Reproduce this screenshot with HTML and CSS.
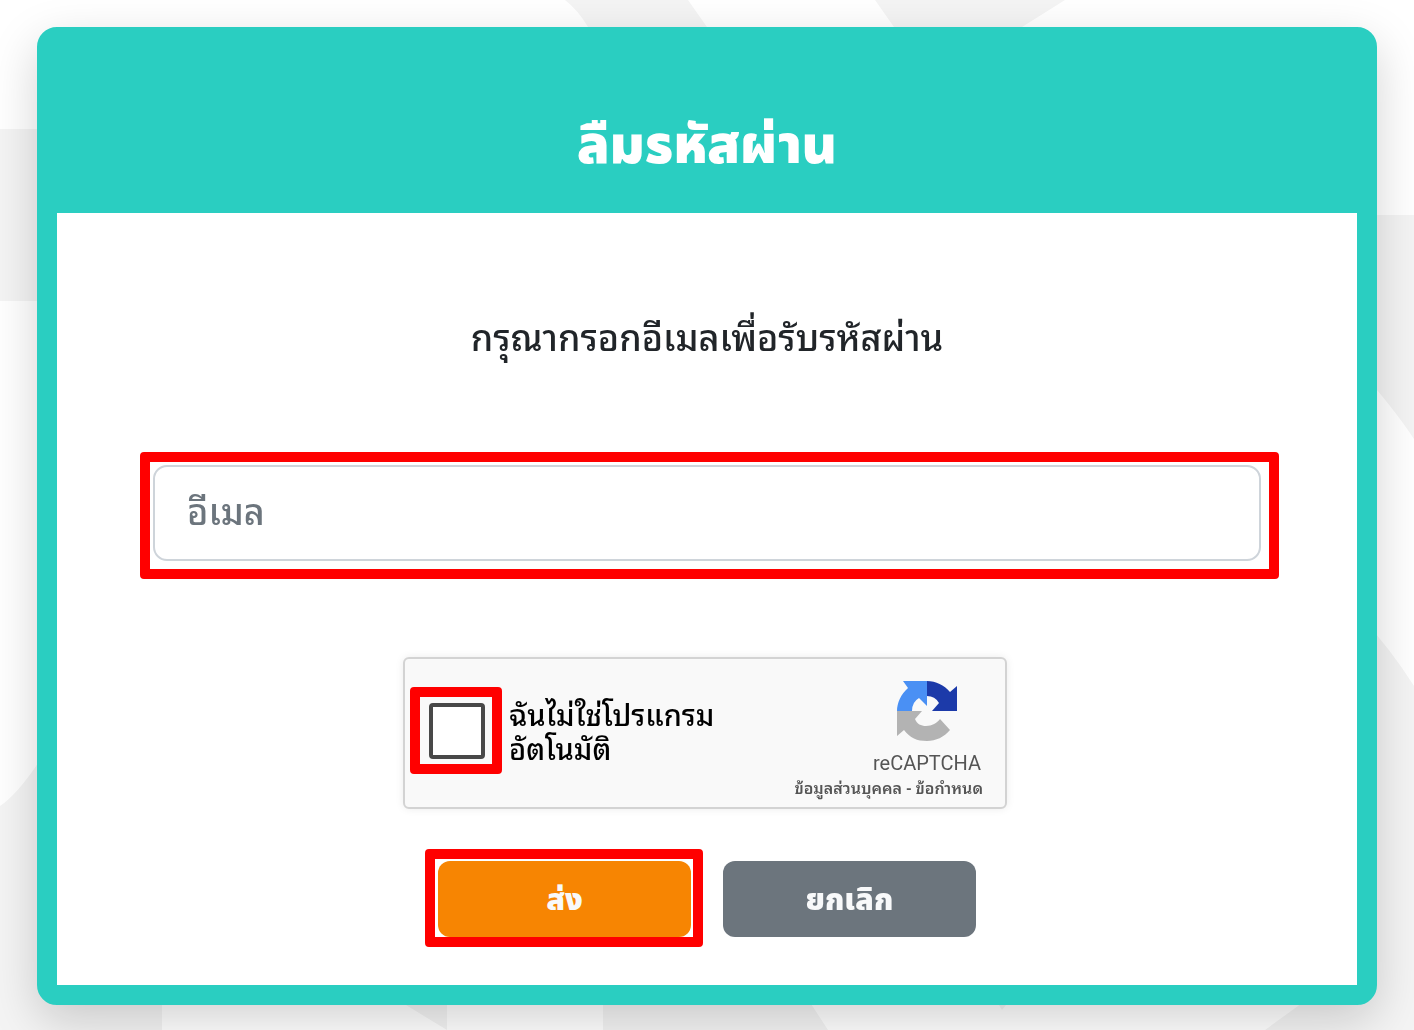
FILE: index.html
```html
<!DOCTYPE html>
<html lang="th">

<head>
    <meta charset="UTF-8">
    <meta name="viewport" content="width=device-width, initial-scale=1">
    <title>ลืมรหัสผ่าน</title>
    <link rel="stylesheet" href="styles.css">
</head>

<body>
    <svg class="bg" viewBox="0 0 1414 1030" preserveAspectRatio="xMidYMid slice" aria-hidden="true">
        <path d="M565 0H688L707 27V40H588V27Q578 10 565 0ZM875 0H1065L1022 27V40H894V27Z" />
        <path d="M0 129H60V301H0ZM1360 215H1414V439Q1395 410 1360 370Z" />
        <path d="M0 806Q20 793 50 745V990H162V1030H0ZM1360 616Q1390 648 1414 686V1030H1265L1320 990H1360Z" />
        <path d="M390 990H447V1030L406 1005ZM603 990H802L828 1030H603ZM990 990H1018L1002 1010Z" />
    </svg>
    <div class="card">
        <h1 class="card-title">ลืมรหัสผ่าน</h1>
        <form class="card-body">
            <label class="hint" for="email">กรุณากรอกอีเมลเพื่อรับรหัสผ่าน</label>
            <div class="field mark mark-field">
                <input type="email" id="email" class="email" placeholder="อีเมล">
            </div>
            <div class="captcha">
                <div class="check mark mark-check">
                    <input type="checkbox" id="robot">
                </div>
                <label class="captcha-text" for="robot">ฉันไม่ใช่โปรแกรม<br>อัตโนมัติ</label>
                <div class="captcha-brand">
                    <svg class="captcha-logo" viewBox="0 0 60 60" aria-hidden="true">
                        <path fill="#1c3aa9" d="M30 0C39 0 47 4 53 11L60 5V30H35L42 22Q38 15 30 15Z" />
                        <path fill="#4a90f4" d="M6 0H30V25L22 17Q15 21 15 30H0C0 22 4 13 11 7Z" />
                        <path fill="#b3b3b3" d="M0 30H25L18 38C20 43 24 45 29 45C35 45 40 42 43 38L53 49C47 56 39 60 30 60C20 60 13 57 7 49L0 55Z" />
                    </svg>
                    <span class="captcha-name">reCAPTCHA</span>
                    <div class="captcha-links">
                        <a href="#">ข้อมูลส่วนบุคคล</a> - <a href="#">ข้อกำหนด</a>
                    </div>
                </div>
            </div>
            <div class="actions">
                <div class="mark mark-send">
                    <button type="submit" class="btn btn-send">ส่ง</button>
                </div>
                <button type="button" class="btn btn-cancel">ยกเลิก</button>
            </div>
        </form>
    </div>
</body>

</html>
```

FILE: styles.css
```css
* {
    box-sizing: border-box;
}

body {
    margin: 0;
    padding: 27px 37px 25px;
    background: #fff;
    color: #212529;
    font-family: "Noto Sans Thai Looped", "Noto Looped Thai", Sarabun, Loma, Garuda, Waree, "Noto Sans Thai", "Noto Sans", sans-serif;
}

.bg {
    position: fixed;
    top: 0;
    left: 0;
    width: 100%;
    height: 100%;
    z-index: -1;
    fill: #f4f4f4;
}

.card {
    border: 20px solid #2acec1;
    border-radius: 20px;
    background: #2acec1;
    box-shadow: 0 16px 48px rgba(0, 0, 0, .175);
}

.card-title {
    margin: 0;
    padding: 60px 20px 26px;
    color: #fff;
    font-family: "Noto Sans Thai", "Noto Sans", sans-serif;
    font-size: 53px;
    font-weight: 900;
    line-height: 80px;
    text-align: center;
}

.card-body {
    display: flex;
    flex-direction: column;
    align-items: center;
    padding: 92px 96px 48px;
    background: #fff;
}

.hint {
    font-size: 36px;
    font-weight: 500;
    line-height: 60px;
    text-align: center;
}

.field {
    width: 100%;
    margin: 100px 0 96px;
}

.email {
    display: block;
    width: 100%;
    height: 96px;
    padding: 0 32px 8px;
    border: 2px solid #ced4da;
    border-radius: 14px;
    color: #495057;
    font-family: inherit;
    font-size: 36px;
    font-weight: 500;
}

.email::placeholder {
    color: #6c757d;
    opacity: 1;
}

/* red frames around the fields to fill in */
.mark {
    position: relative;
}

.mark::after {
    content: "";
    position: absolute;
    border: 10px solid #f00;
    border-radius: 4px;
    pointer-events: none;
}

.mark-field::after {
    inset: -13px -18px -18px -13px;
}

.mark-check::after {
    inset: -16px -17px -15px -19px;
}

.mark-send::after {
    inset: -12px -12px -10px -13px;
}

.captcha {
    display: flex;
    align-items: center;
    width: 604px;
    max-width: 100%;
    height: 152px;
    margin-right: 4px;
    padding: 0 22px 4px 24px;
    border: 2px solid #d3d3d3;
    border-radius: 6px;
    background: #f9f9f9;
    box-shadow: 0 0 8px rgba(0, 0, 0, .08);
}

.check input {
    display: block;
    appearance: none;
    width: 56px;
    height: 56px;
    margin: 0;
    border: 4px solid #484848;
    border-radius: 4px;
    background: #fff;
}

.captcha-text {
    margin-left: 24px;
    padding-bottom: 2px;
    color: #000;
    font-size: 29px;
    font-weight: 500;
    line-height: 34px;
    white-space: nowrap;
}

.captcha-brand {
    display: flex;
    flex-direction: column;
    align-items: flex-end;
    margin-left: auto;
    padding-top: 16px;
    color: #555;
}

.captcha-logo {
    width: 60px;
    height: 60px;
    margin-right: 26px;
}

.captcha-name {
    margin-top: 8px;
    margin-right: 2px;
    font-family: Roboto, sans-serif;
    font-size: 20px;
    line-height: 28px;
}

.captcha-links {
    font-size: 16px;
    font-weight: 600;
    line-height: 20px;
    white-space: nowrap;
}

.captcha-links a {
    color: #555;
    text-decoration: none;
}

.actions {
    display: flex;
    gap: 32px;
    margin-top: 52px;
}

.btn {
    display: block;
    width: 253px;
    height: 76px;
    padding: 4px 0 0;
    border: 0;
    border-radius: 12px;
    color: #f8f9fa;
    font-family: "Noto Sans Thai", "Noto Sans", sans-serif;
    font-size: 30px;
    font-weight: 900;
    cursor: pointer;
}

.btn-send {
    background: #f78502;
}

.btn-cancel {
    background: #6c757d;
}
```
